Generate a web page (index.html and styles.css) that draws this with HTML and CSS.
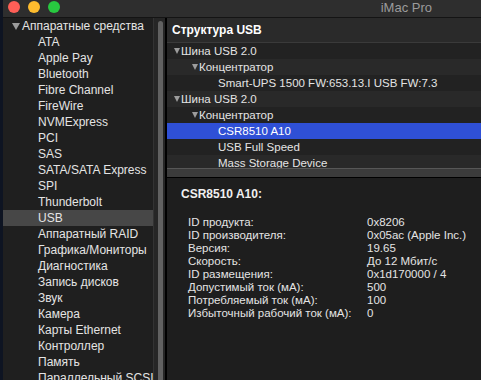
FILE: index.html
```html
<!DOCTYPE html>
<html lang="ru">
<head>
  <meta charset="UTF-8">
  <title>iMac Pro</title>
  <meta name="viewport" content="width=device-width, initial-scale=1">
  <link rel="stylesheet" href="styles.css">
</head>
<body>

  <div class="window">
    <header class="titlebar">
      <div class="lights">
        <span class="light red"></span>
        <span class="light yellow"></span>
        <span class="light green"></span>
      </div>
      <div class="title">iMac Pro</div>
    </header>

    <div class="main">
      <aside class="sidebar">
        <ul class="nav">
          <li class="group"><span class="caret"></span>Аппаратные средства</li>
          <li>ATA</li>
          <li>Apple Pay</li>
          <li>Bluetooth</li>
          <li>Fibre Channel</li>
          <li>FireWire</li>
          <li>NVMExpress</li>
          <li>PCI</li>
          <li>SAS</li>
          <li>SATA/SATA Express</li>
          <li>SPI</li>
          <li>Thunderbolt</li>
          <li class="active">USB</li>
          <li>Аппаратный RAID</li>
          <li>Графика/Мониторы</li>
          <li>Диагностика</li>
          <li>Запись дисков</li>
          <li>Звук</li>
          <li>Камера</li>
          <li>Карты Ethernet</li>
          <li>Контроллер</li>
          <li>Память</li>
          <li>Параллельный SCSI</li>
        </ul>
        <div class="scrollbar"><div class="thumb"></div></div>
      </aside>

      <section class="content">
        <div class="tree-pane">
          <div class="tree-head">Структура USB</div>
          <ul class="tree">
            <li class="lvl0"><span class="caret"></span>Шина USB 2.0</li>
            <li class="lvl1"><span class="caret"></span>Концентратор</li>
            <li class="lvl2">Smart-UPS 1500 FW:653.13.I USB FW:7.3</li>
            <li class="lvl0"><span class="caret"></span>Шина USB 2.0</li>
            <li class="lvl1"><span class="caret"></span>Концентратор</li>
            <li class="lvl2 selected">CSR8510 A10</li>
            <li class="lvl2">USB Full Speed</li>
            <li class="lvl2">Mass Storage Device</li>
          </ul>
        </div>

        <div class="splitter"></div>

        <div class="details">
          <h2>CSR8510 A10:</h2>
          <dl class="props">
            <dt>ID продукта:</dt><dd>0x8206</dd>
            <dt>ID производителя:</dt><dd>0x05ac (Apple Inc.)</dd>
            <dt>Версия:</dt><dd>19.65</dd>
            <dt>Скорость:</dt><dd>До 12 Мбит/с</dd>
            <dt>ID размещения:</dt><dd>0x1d170000 / 4</dd>
            <dt>Допустимый ток (мА):</dt><dd>500</dd>
            <dt>Потребляемый ток (мА):</dt><dd>100</dd>
            <dt>Избыточный рабочий ток (мА):</dt><dd>0</dd>
          </dl>
        </div>
      </section>
    </div>
  </div>

</body>
</html>
```

FILE: styles.css
```css
body {
  margin: 0;
  font-family: "Liberation Sans", Arial, sans-serif;
  background: #1e1e1e;
  color: #e4e4e4;
  overflow: hidden;
}

ul {
  list-style: none;
  margin: 0;
  padding: 0;
}

.window {
  height: 380px;
  border-left: 3px solid #0e1422;
  display: flex;
  flex-direction: column;
  overflow: hidden;
}

/* title bar */
.titlebar {
  height: 17px;
  flex-shrink: 0;
  background: #2e2e2e;
  border-bottom: 1px solid #141414;
  display: flex;
  align-items: center;
  justify-content: space-between;
}

.lights {
  display: flex;
  gap: 8px;
  padding-left: 5px;
  margin-top: -3px;
}

.light {
  width: 12px;
  height: 12px;
  border-radius: 50%;
}

.red { background: #fe5f57; }
.yellow { background: #febc2e; }
.green { background: #28c840; }

.title {
  font-size: 13px;
  color: #9b9b9b;
  padding-right: 49px;
  margin-top: -3px;
}

.main {
  flex: 1;
  display: flex;
  min-height: 0;
}

/* sidebar */
.sidebar {
  width: 162px;
  flex-shrink: 0;
  display: flex;
  background: #1f1f1f;
  border-right: 2px solid #000;
}

.nav {
  flex: 1;
  font-size: 12px;
}

.nav li {
  height: 16px;
  line-height: 16px;
  padding-left: 35px;
  white-space: nowrap;
}

.nav li.group {
  padding-left: 9px;
  display: flex;
  align-items: center;
}

.nav li.active {
  background: #474747;
}

.caret {
  width: 0;
  height: 0;
  border-left: 4px solid transparent;
  border-right: 4px solid transparent;
  border-top: 7px solid #9c9c9c;
  margin-right: 2px;
  flex-shrink: 0;
}

.scrollbar {
  width: 14px;
  background: #262626;
  border-left: 1px solid #333;
  padding: 3px 2px 0 4px;
  box-sizing: border-box;
}

.thumb {
  height: 400px;
  border-radius: 4px;
  background: #616161;
}

/* right side */
.content {
  flex: 1;
  display: flex;
  flex-direction: column;
  min-width: 0;
}

.tree-pane {
  height: 150px;
  flex-shrink: 0;
  overflow: hidden;
}

.tree-head {
  height: 24px;
  line-height: 24px;
  padding-left: 5px;
  background: #2a2a2a;
  border-bottom: 1px solid #3a3a3a;
  font-size: 12px;
  font-weight: bold;
  color: #fff;
}

.tree {
  font-size: 11.5px;
}

.tree li {
  height: 16px;
  display: flex;
  align-items: center;
  white-space: nowrap;
  background: #222;
}

.tree li:nth-child(even) {
  background: #292929;
}

.tree li.selected {
  background: #2f50d6;
  color: #fff;
}

.tree .caret {
  border-left-width: 3.5px;
  border-right-width: 3.5px;
  border-top-width: 6px;
  margin-right: 1px;
}

.lvl0 { padding-left: 7px; }
.lvl1 { padding-left: 25px; }
.lvl2 { padding-left: 51px; }

.splitter {
  height: 8px;
  flex-shrink: 0;
  background: #3b3b3b;
  border-top: 1px solid #575757;
  border-bottom: 1px solid #000;
}

/* details */
.details {
  flex: 1;
  background: #1e1e1e;
  padding: 8px 0 0 14px;
}

.details h2 {
  margin: 0;
  font-size: 12px;
  line-height: 16px;
  font-weight: bold;
  color: #f0f0f0;
}

.props {
  display: grid;
  grid-template-columns: 179px 1fr;
  margin: 14px 0 0 7px;
  font-size: 11.5px;
  line-height: 13px;
}

.props dt,
.props dd {
  margin: 0;
  white-space: nowrap;
}
```
